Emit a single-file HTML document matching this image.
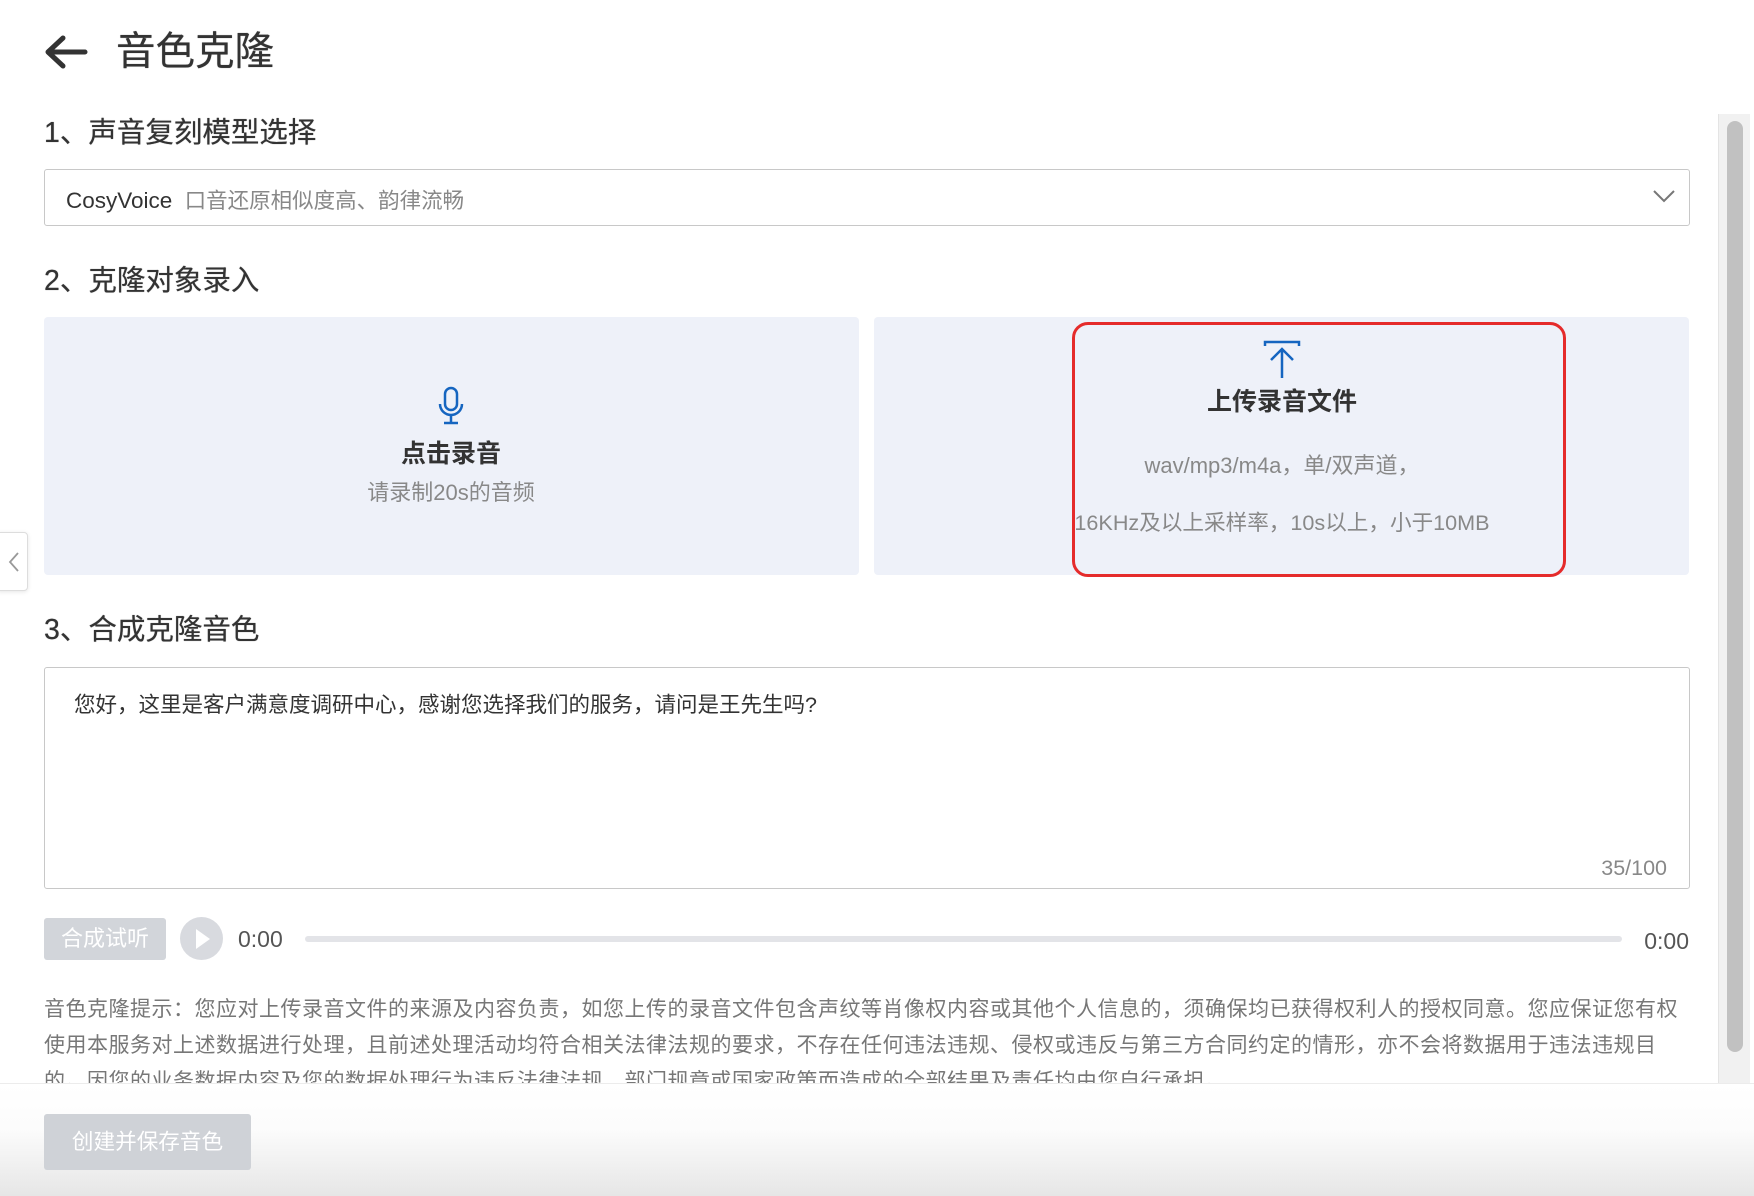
<!DOCTYPE html>
<html><head><meta charset="utf-8"><style>
*{margin:0;padding:0;box-sizing:border-box}
body{width:1754px;height:1196px;overflow:hidden;background:#fff;font-family:"Liberation Sans","Noto Sans CJK SC",sans-serif;color:#333;position:relative}
.a{position:absolute;white-space:nowrap}
.h{font-size:28.5px;color:#333;line-height:1;text-shadow:0 0 0.6px #333}
.card{position:absolute;top:317px;height:258px;width:815px;background:#eef1f9;border-radius:4px}
.note{font-size:21px;color:#777;letter-spacing:0.5px;line-height:36px}
</style></head><body>
<svg class="a" style="left:43px;top:34px" width="46" height="36" viewBox="0 0 46 36"><path d="M42 18H6M20 4L5 18L20 32" fill="none" stroke="#333" stroke-width="5" stroke-linecap="round" stroke-linejoin="round"/></svg>
<div class="a" style="left:116px;top:31px;font-size:39.5px;color:#333;line-height:42px;text-shadow:0 0 0.6px #333">音色克隆</div>
<div class="a h" style="left:44px;top:119px">1、声音复刻模型选择</div>
<div class="a" style="left:44px;top:169px;width:1646px;height:57px;border:1px solid #c8c8c8;border-radius:3px"></div>
<div class="a" style="left:66px;top:184px;font-size:22.5px;color:#333">CosyVoice <span style="color:#888;font-size:21.5px;margin-left:6px">口音还原相似度高、韵律流畅</span></div>
<svg class="a" style="left:1652px;top:188px" width="24" height="16" viewBox="0 0 24 16"><path d="M2 3L12 13L22 3" fill="none" stroke="#777" stroke-width="2"/></svg>
<div class="a h" style="left:44px;top:267px">2、克隆对象录入</div>
<div class="card" style="left:44px"></div>
<div class="card" style="left:874px"></div>
<svg class="a" style="left:436px;top:386px" width="30" height="40" viewBox="0 0 30 40"><rect x="9" y="2" width="12" height="22" rx="6" fill="none" stroke="#1565c0" stroke-width="2.5"/><path d="M4 18a11 11 0 0 0 22 0M15 29v7M8 37h14" fill="none" stroke="#1565c0" stroke-width="2.5"/></svg>
<div class="a" style="left:301px;top:434px;width:300px;text-align:center;font-size:25px;font-weight:bold;color:#333">点击录音</div>
<div class="a" style="left:251px;top:475px;width:400px;text-align:center;font-size:22px;color:#888">请录制20s的音频</div>
<div class="a" style="left:1072px;top:322px;width:494px;height:255px;border:3.5px solid #e52b2b;border-radius:16px"></div>
<svg class="a" style="left:1262px;top:340px" width="40" height="40" viewBox="0 0 40 40"><path d="M3 6V2H37V6" fill="none" stroke="#1565c0" stroke-width="2.5"/><path d="M20 38V9M9 20L20 9L31 20" fill="none" stroke="#1565c0" stroke-width="2.5"/></svg>
<div class="a" style="left:1132px;top:382px;width:300px;text-align:center;font-size:25px;font-weight:bold;color:#333">上传录音文件</div>
<div class="a" style="left:1032px;top:448px;width:500px;text-align:center;font-size:22px;color:#888">wav/mp3/m4a，单/双声道，</div>
<div class="a" style="left:1032px;top:506px;width:500px;text-align:center;font-size:21.6px;color:#888">16KHz及以上采样率，10s以上，小于10MB</div>
<div class="a h" style="left:44px;top:616px">3、合成克隆音色</div>
<div class="a" style="left:44px;top:667px;width:1646px;height:222px;border:1px solid #c8c8c8;border-radius:3px"></div>
<div class="a" style="left:74px;top:688px;font-size:21.5px;color:#333">您好，这里是客户满意度调研中心，感谢您选择我们的服务，请问是王先生吗?</div>
<div class="a" style="left:1540px;top:856px;width:127px;text-align:right;font-size:21.5px;color:#888">35/100</div>
<div class="a" style="left:44px;top:918px;width:122px;height:42px;background:#d2d5da;border-radius:3px;color:#fff;font-size:22px;text-align:center;line-height:42px">合成试听</div>
<div class="a" style="left:180px;top:917px;width:43px;height:43px;border-radius:50%;background:#d8dadf"></div>
<svg class="a" style="left:195px;top:928px" width="16" height="22" viewBox="0 0 16 22"><path d="M1 1L15 11L1 21Z" fill="#fff"/></svg>
<div class="a" style="left:238px;top:926px;font-size:23px;color:#555">0:00</div>
<div class="a" style="left:305px;top:936px;width:1317px;height:6px;background:#e3e4e8;border-radius:3px"></div>
<div class="a" style="left:1610px;top:928px;width:79px;text-align:right;font-size:23px;color:#555">0:00</div>
<div class="a" style="left:44px;top:992px;height:91px;overflow:hidden">
<div class="note">音色克隆提示：您应对上传录音文件的来源及内容负责，如您上传的录音文件包含声纹等肖像权内容或其他个人信息的，须确保均已获得权利人的授权同意。您应保证您有权</div>
<div class="note">使用本服务对上述数据进行处理，且前述处理活动均符合相关法律法规的要求，不存在任何违法违规、侵权或违反与第三方合同约定的情形，亦不会将数据用于违法违规目</div>
<div class="note">的。因您的业务数据内容及您的数据处理行为违反法律法规、部门规章或国家政策而造成的全部结果及责任均由您自行承担。</div>
</div>
<div class="a" style="left:0;top:1083px;width:1754px;height:113px;border-top:1px solid #ececec;background:linear-gradient(#fff 0%,#fcfcfc 40%,#e6e6e6 100%)"></div>
<div class="a" style="left:44px;top:1114px;width:207px;height:56px;background:#cfd2d7;border-radius:3px;color:#fff;font-size:21.6px;text-align:center;line-height:56px">创建并保存音色</div>
<div class="a" style="left:1718px;top:114px;width:32px;height:969px;background:#f1f1f1;border-left:1px solid #e4e4e4"></div>
<div class="a" style="left:1727px;top:121px;width:16px;height:931px;background:#c1c1c1;border-radius:8px"></div>
<div class="a" style="left:-4px;top:532px;width:32px;height:59px;background:#fff;border:1px solid #ddd;border-radius:4px;box-shadow:0 1px 4px rgba(0,0,0,.1)"></div>
<svg class="a" style="left:7px;top:551px" width="14" height="22" viewBox="0 0 14 22"><path d="M11 2L3 11L11 20" fill="none" stroke="#999" stroke-width="1.8"/></svg>
</body></html>
